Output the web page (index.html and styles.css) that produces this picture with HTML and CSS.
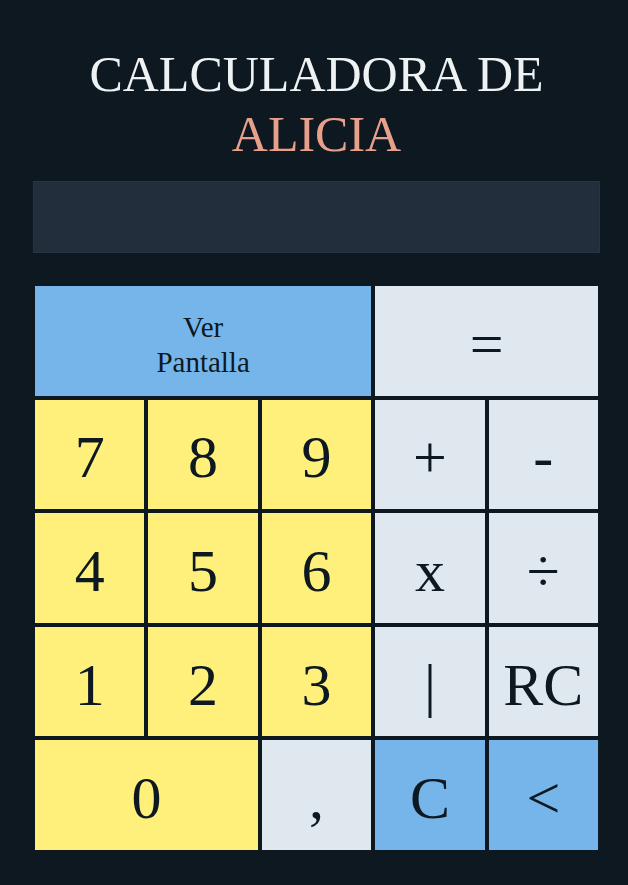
FILE: index.html
```html
<!DOCTYPE html>
<html lang="es">
<head>
<meta charset="utf-8">
<title>Calculadora de Alicia</title>
<link rel="stylesheet" href="styles.css">
</head>
<body>
<main class="app">
  <h1 class="title">CALCULADORA DE<br><span class="name">ALICIA</span></h1>
  <div class="display"></div>
  <div class="keys">
    <button class="key blue span3 small">Ver<br>Pantalla</button>
    <button class="key grey span2">=</button>
    <button class="key yellow">7</button>
    <button class="key yellow">8</button>
    <button class="key yellow">9</button>
    <button class="key grey">+</button>
    <button class="key grey">-</button>
    <button class="key yellow">4</button>
    <button class="key yellow">5</button>
    <button class="key yellow">6</button>
    <button class="key grey">x</button>
    <button class="key grey">÷</button>
    <button class="key yellow">1</button>
    <button class="key yellow">2</button>
    <button class="key yellow">3</button>
    <button class="key grey">|</button>
    <button class="key grey">RC</button>
    <button class="key yellow span2">0</button>
    <button class="key grey">,</button>
    <button class="key blue">C</button>
    <button class="key blue">&lt;</button>
  </div>
</main>
</body>
</html>
```
FILE: styles.css
```css
html, body {
  margin: 0;
  padding: 0;
  background: #0d1821;
}
body {
  font-family: "Liberation Serif", "Times New Roman", serif;
  color: #0d1821;
}
.app {
  width: 567px;
  margin-left: 33px;
  padding-top: 44px;
}
.title {
  margin: 0;
  font-weight: normal;
  font-size: 50px;
  line-height: 60px;
  text-align: center;
  color: #eef2f3;
}
.name {
  color: #e9a08b;
}
.display {
  margin-top: 17px;
  height: 70px;
  background: #222e3b;
  border: 1px solid #273442;
}
.keys {
  margin-top: 31px;
  padding: 2px;
  display: grid;
  grid-template-columns: repeat(5, 1fr);
  grid-template-rows: repeat(5, 109.6px);
  gap: 4px;
}
.key {
  border: none;
  margin: 0;
  padding: 6px 0 0;
  font-family: "Liberation Serif", "Times New Roman", serif;
  font-size: 60px;
  color: #0d1821;
  display: flex;
  align-items: center;
  justify-content: center;
  line-height: 1;
}
.small {
  font-size: 29px;
  line-height: 35px;
  padding-top: 8px;
}
.span3 { grid-column: span 3; }
.span2 { grid-column: span 2; }
.yellow { background: #fef07b; }
.grey { background: #e0e8ef; }
.blue { background: #76b5e9; }
```
